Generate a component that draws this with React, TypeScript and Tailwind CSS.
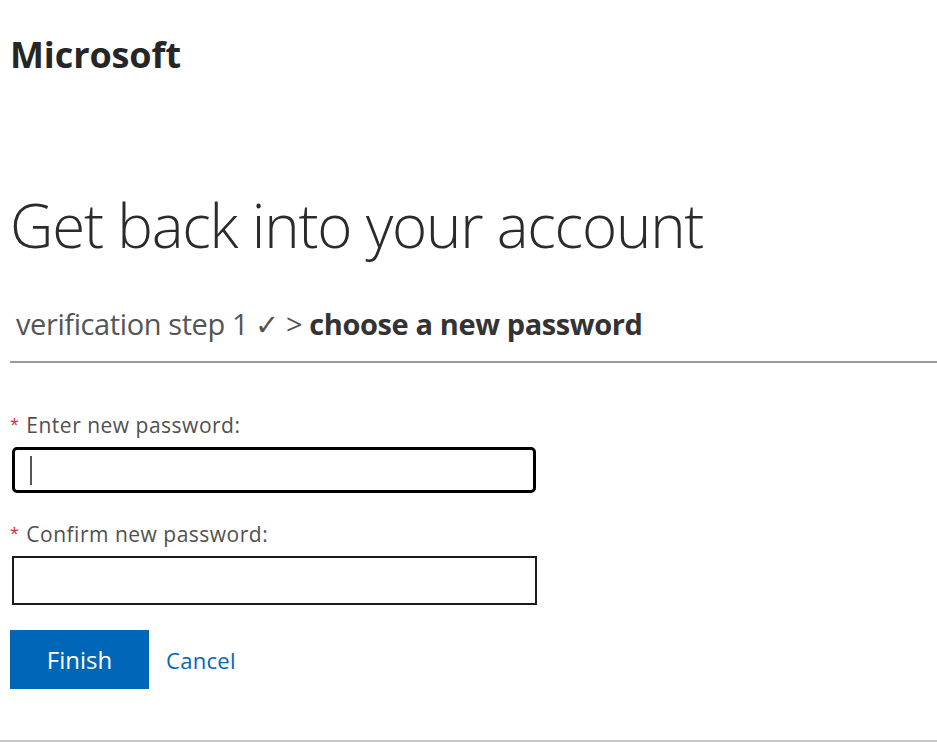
import React from "react";

const font = { fontFamily: '"Open Sans", "Noto Sans", "Liberation Sans", sans-serif' };

function Label({ text }: { text: string }) {
  return (
    <label className="flex h-[24px] items-baseline text-[21px] leading-[24px] tracking-[0.5px] text-[#505050]">
      <span className="mr-[7px] -translate-y-[3px] text-[16px] text-[#d0253c]">*</span>
      {text}
    </label>
  );
}

export default function App() {
  return (
    <div style={font} className="flex h-[742px] w-full flex-col border-b-2 border-[#c8c8c8] bg-white pl-[10px]">
      <div className="mt-[33px] h-[44px] text-[36px] font-bold leading-[44px] tracking-[-0.1px] text-[#262626]">Microsoft</div>

      <h1 className="mt-[112px] h-[72px] text-[60px] font-light leading-[72px] tracking-[-1.2px] text-[#2b2b2b]">
        Get back into your account
      </h1>

      <div className="mt-[45px] h-[36px] pl-[6px] text-[29px] leading-[36px] tracking-[-0.4px] text-[#555]">
        verification step 1 ✓ &gt; <span className="font-bold text-[#333]">choose a new password</span>
      </div>

      <div className="mt-[19px] h-[2px] w-full bg-[#9a9a9a]" />

      <form className="flex flex-col">
        <div className="mt-[50px]">
          <Label text="Enter new password:" />
        </div>
        <div className="mt-[10px] ml-[2px] flex h-[46px] w-[524px] items-center rounded-[5px] border-[3px] border-black bg-white pl-[15px]">
          <span className="h-[29px] w-[2px] bg-[#555]" />
        </div>

        <div className="mt-[29px]">
          <Label text="Confirm new password:" />
        </div>
        <div className="mt-[10px] ml-[2px] h-[49px] w-[525px] border-[2px] border-[#1a1a1a] bg-white" />

        <div className="mt-[25px] flex items-center">
          <button type="button" className="h-[59px] w-[139px] bg-[#0067b8] text-[24px] leading-none text-white">
            Finish
          </button>
          <a href="#" className="ml-[17px] text-[22px] leading-none tracking-[0.3px] text-[#0067b8]">
            Cancel
          </a>
        </div>
      </form>
    </div>
  );
}
